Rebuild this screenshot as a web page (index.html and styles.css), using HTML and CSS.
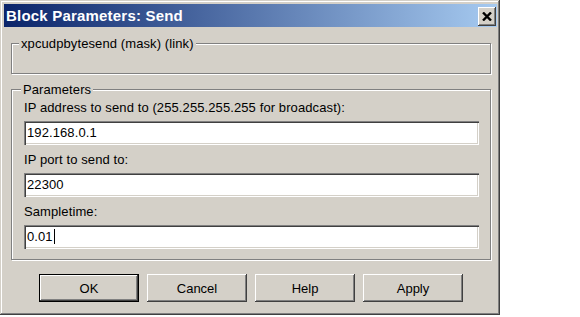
FILE: index.html
```html
<!DOCTYPE html>
<html lang="en">
<head>
    <meta charset="UTF-8">
    <title>Block Parameters: Send</title>
    <link rel="stylesheet" href="styles.css">
</head>
<body>
    <div class="window">
        <!-- Title bar -->
        <div class="titlebar">
            <span class="title">Block Parameters: Send</span>
            <button class="close-btn" aria-label="Close">
                <svg width="10" height="9" viewBox="0 0 10 9">
                    <path d="M1 0.5 L9 8.5 M9 0.5 L1 8.5" stroke="#000" stroke-width="2.4" fill="none"/>
                </svg>
            </button>
        </div>

        <!-- Mask description -->
        <div class="group mask-group">
            <div class="group-title">xpcudpbytesend (mask) (link)</div>
        </div>

        <!-- Parameters -->
        <div class="group params-group">
            <div class="group-title">Parameters</div>
            <div class="field-label">IP address to send to (255.255.255.255 for broadcast):</div>
            <div class="field">192.168.0.1</div>
            <div class="field-label">IP port to send to:</div>
            <div class="field">22300</div>
            <div class="field-label">Sampletime:</div>
            <div class="field">0.01<span class="caret"></span></div>
        </div>

        <!-- Buttons -->
        <div class="buttons">
            <button class="btn default">OK</button>
            <button class="btn">Cancel</button>
            <button class="btn">Help</button>
            <button class="btn">Apply</button>
        </div>
    </div>
</body>
</html>
```

FILE: styles.css
```css
/* Classic Windows 2000 dialog */
:root { --face: #d4d0c8; --shadow: #808080; --dark: #404040; --light: #fff; }
body { margin: 0; background: #fff; font-family: 'Liberation Sans', Arial, sans-serif; font-size: 13px; letter-spacing: 0.1px; color: #000; }
.window { width: 500px; height: 315px; box-sizing: border-box; padding: 4px 3px 3px 4px; background: var(--face); box-shadow: inset -1px -1px 0 var(--dark), inset 1px 1px 0 var(--face), inset -2px -2px 0 var(--shadow), inset 2px 2px 0 var(--light); }
.titlebar { height: 23px; display: flex; align-items: flex-start; justify-content: space-between; padding: 0 1px 0 2px; background: linear-gradient(to right, #0a246a, #a6caf0); }
.title { color: #fff; font-weight: bold; font-size: 15px; letter-spacing: 0.2px; line-height: 23px; }
.close-btn { width: 18px; height: 19px; margin-top: 3px; padding: 0; border: none; background: var(--face); display: flex; align-items: center; justify-content: center; box-shadow: inset -1px -1px 0 var(--dark), inset 1px 1px 0 var(--light), inset -2px -2px 0 var(--shadow); }
/* Etched group boxes */
.group { border: 1px solid var(--shadow); box-shadow: 1px 1px 0 var(--light), inset 1px 1px 0 var(--light); margin: 0 6px 0 7px; padding: 0 11px 0 12px; box-sizing: border-box; }
.group-title { display: table; margin: -8px 0 0 -3px; padding: 0 2px; line-height: 15px; background: var(--face); }
.mask-group { margin-top: 16px; height: 31px; }
.mask-group .group-title { margin-left: -5px; }
.params-group { margin-top: 15px; height: 171px; }
.field-label { line-height: 15px; margin: 7px 0 6px; }
.params-group .group-title + .field-label { margin-top: 3px; }
.field { height: 24px; box-sizing: border-box; padding: 3px 3px 0; line-height: 17px; background: #fff; white-space: nowrap; box-shadow: inset 1px 1px 0 var(--shadow), inset 2px 2px 0 var(--dark), inset -1px -1px 0 var(--light), inset -2px -2px 0 var(--face); }
.caret { display: inline-block; width: 1px; height: 15px; background: #000; vertical-align: -3px; margin-left: 1px; }
/* Push buttons */
.buttons { display: flex; gap: 8px; margin-top: 14px; padding-left: 35px; }
.btn { width: 100px; height: 28px; padding: 0; border: none; background: var(--face); font-family: inherit; font-size: 13px; color: #000; box-shadow: inset -1px -1px 0 var(--dark), inset 1px 1px 0 var(--light), inset -2px -2px 0 var(--shadow); }
.btn.default { box-shadow: inset 0 0 0 1px #000, inset -2px -2px 0 var(--dark), inset 2px 2px 0 var(--light), inset -3px -3px 0 var(--shadow); }
```
